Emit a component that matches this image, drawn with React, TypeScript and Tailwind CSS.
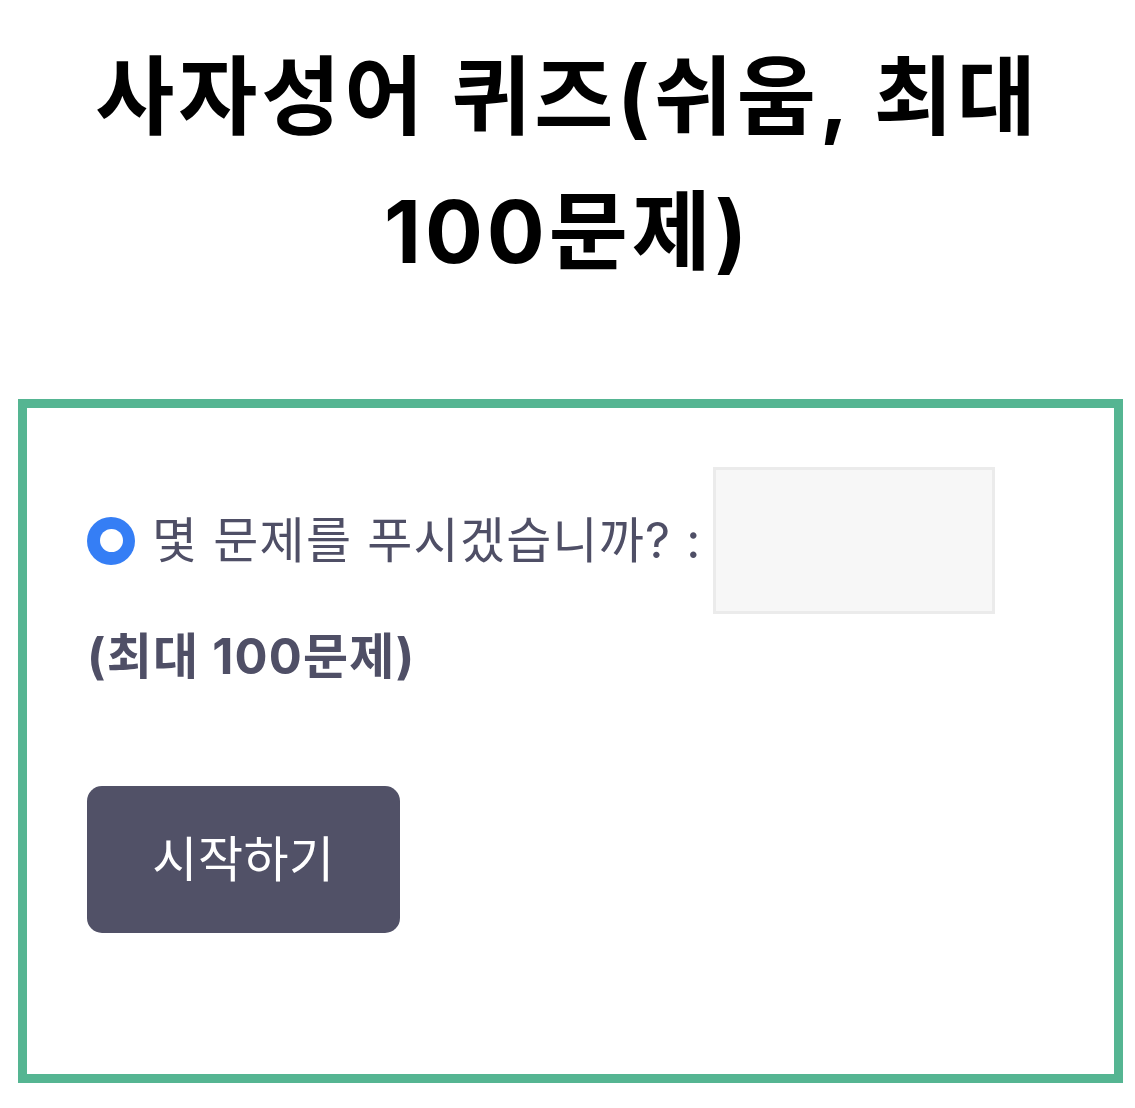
export default function App() {
  return (
    <div
      className="min-h-[1108px] bg-white"
      style={{ fontFamily: 'Inter, "Noto Sans CJK KR", sans-serif' }}
    >
      <h1 className="pt-[30px] px-[30px] text-center text-[86px] font-bold leading-[135px] tracking-[0.045em] text-black">
        사자성어 퀴즈(쉬움, 최대 100문제)
      </h1>

      <div className="mt-[99px] ml-[18px] w-[1105px] border-[9px] border-[#55b592] pl-[60px] pt-[59px] pb-[141px]">
        <div className="flex items-center text-[49px] tracking-[0.025em] text-[#4f4f66]">
          <span className="flex h-[48px] w-[48px] items-center justify-center rounded-full bg-[#357ef5]">
            <span className="h-[23px] w-[23px] rounded-full bg-white" />
          </span>
          <span className="ml-[17px] leading-none">몇 문제를 푸시겠습니까? :</span>
          <input
            type="text"
            className="ml-[11px] h-[147px] w-[282px] border-[3px] border-[#ebebeb] bg-[#f7f7f7] outline-none"
          />
        </div>
        <p className="text-[49px] font-bold leading-[86px] tracking-[0.025em] text-[#4f4f66]">(최대 100문제)</p>

        <button className="mt-[86px] h-[147px] w-[313px] rounded-[15px] bg-[#515167] text-[49px] tracking-[0.01em] text-white">
          시작하기
        </button>
      </div>
    </div>
  )
}
